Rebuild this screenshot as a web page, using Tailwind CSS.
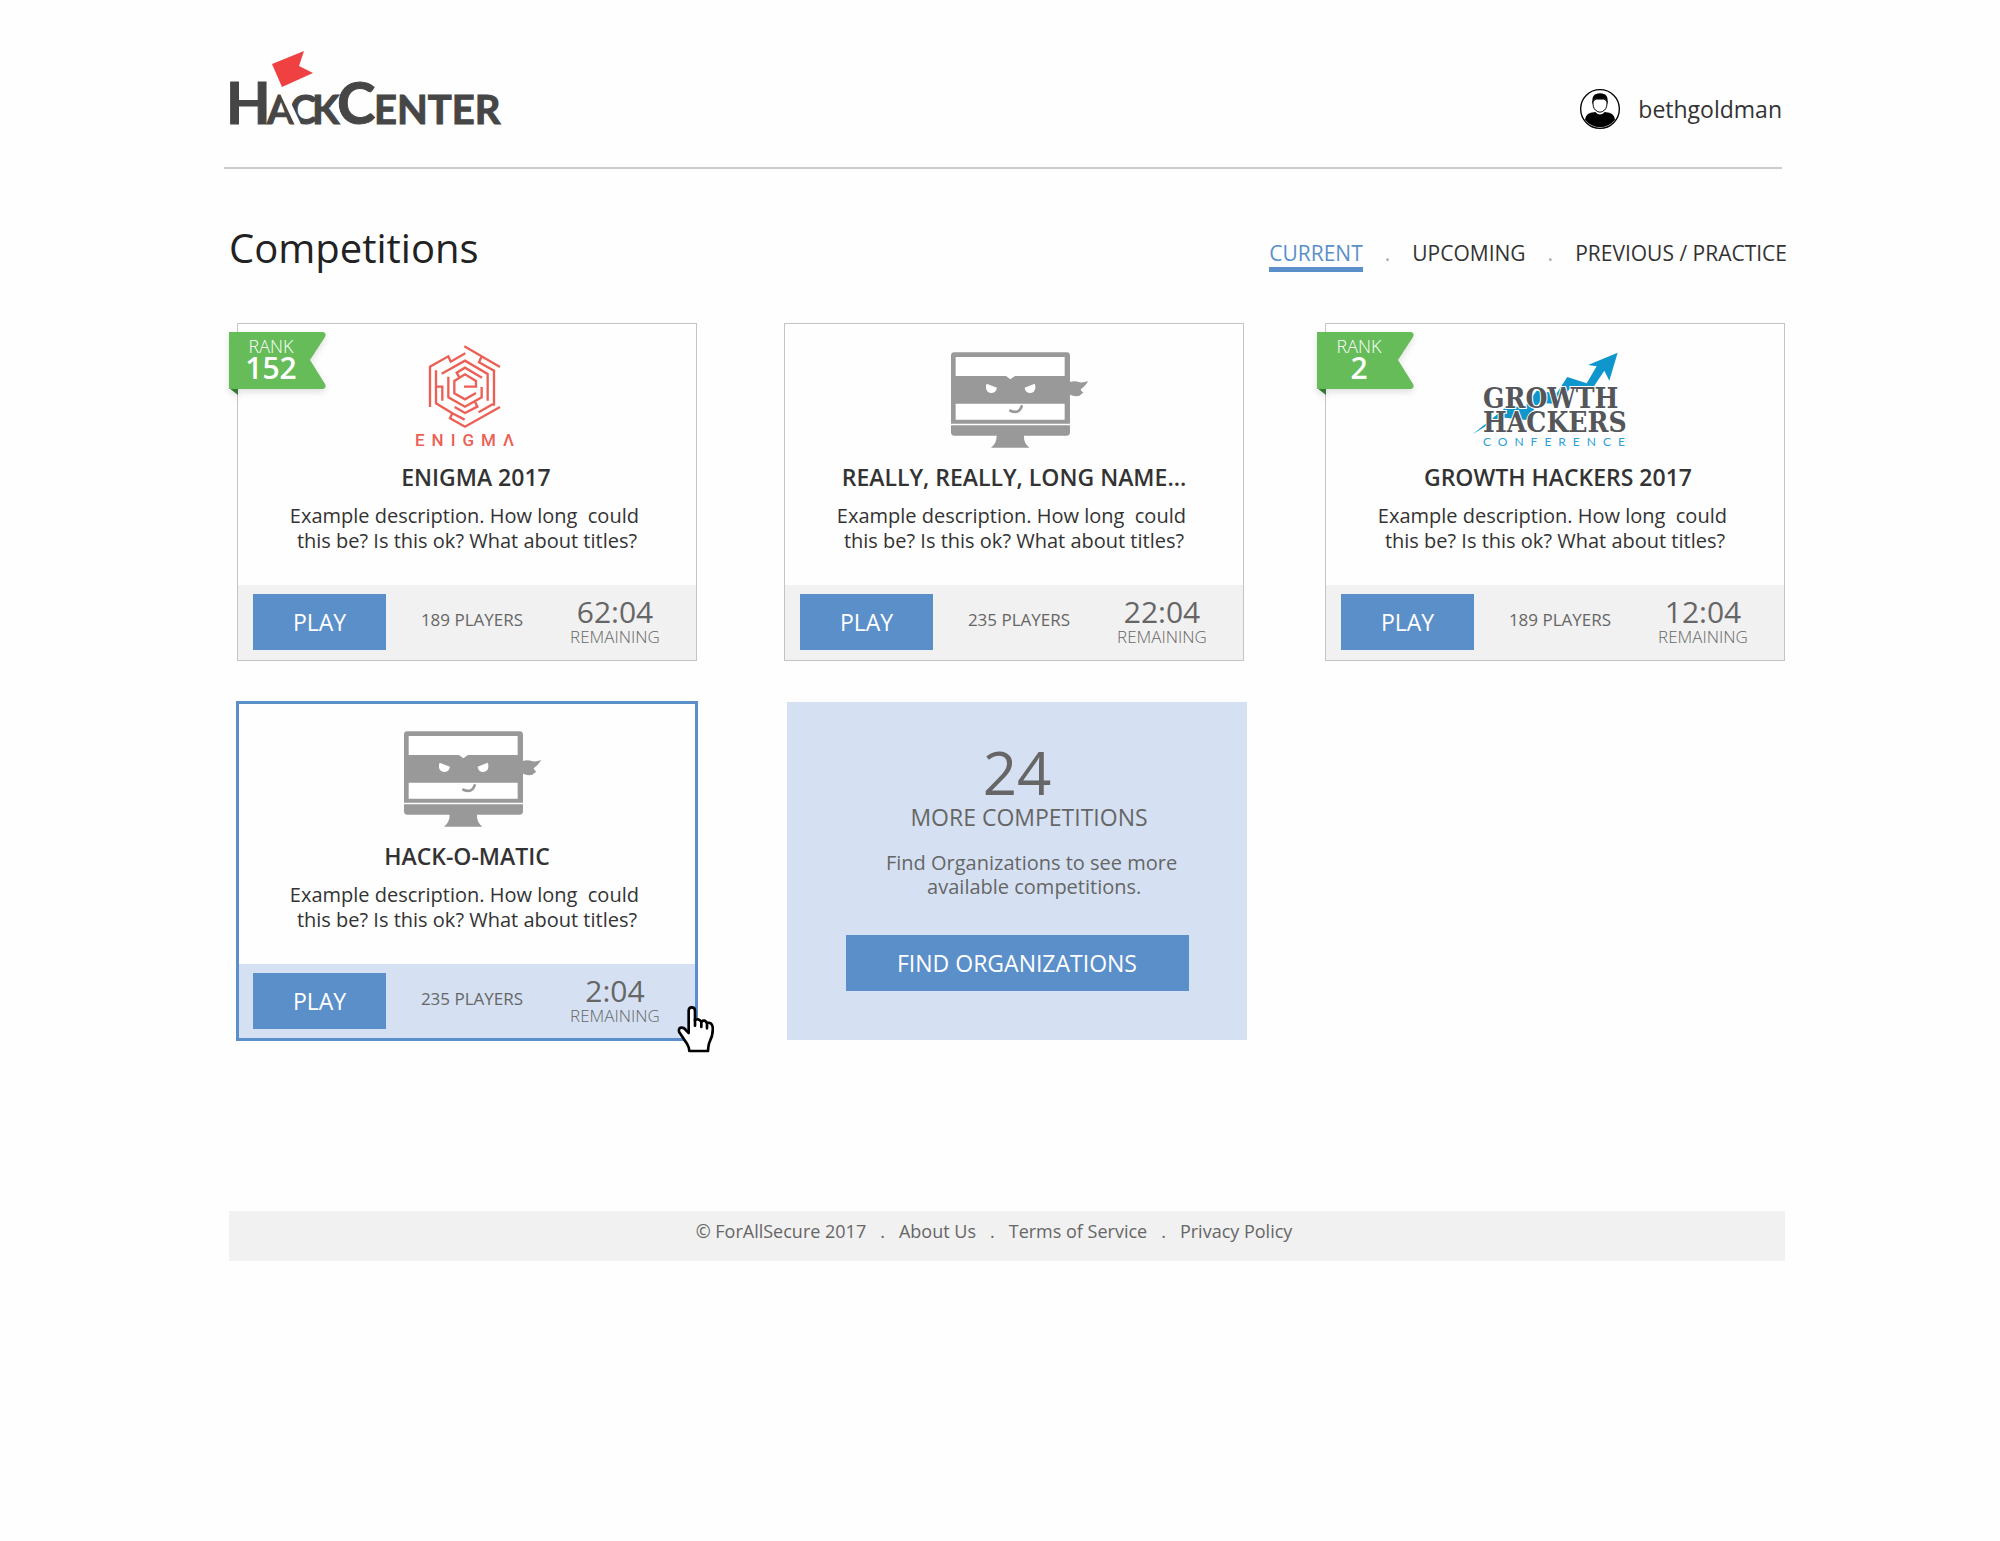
<!DOCTYPE html>
<html lang="en">
<head>
  <meta charset="UTF-8" />
  <meta name="viewport" content="width=device-width, initial-scale=1.0"/>
  <title>HackCenter - Competitions</title>
  <script src="https://cdn.jsdelivr.net/npm/@tailwindcss/browser@4"></script>
</head>
<body class="bg-[#fefefe] font-['Open_Sans',sans-serif] text-[#333]">

  <!-- HEADER -->
  <header class="ml-[224px] mr-[218px] pt-[45px] pb-[38px] flex items-end justify-between border-b-2 border-[#ccc]">
    <a href="#" aria-label="HackCenter">
      <svg class="block" width="290" height="84" viewBox="-1 0 290 84" fill="#464646">
        <g font-family="Lato, sans-serif" font-weight="700" font-size="40" stroke="#464646" stroke-width="1">
          <text y="79"><tspan x="1" font-size="58">H</tspan><tspan x="42">A</tspan><tspan x="65">C</tspan><tspan x="87">K</tspan><tspan x="112" font-size="58">C</tspan><tspan x="149">ENTER</tspan></text>
        </g>
        <path d="M58 48L74 82" stroke="#fefefe" stroke-width="6"/>
        <path d="M47 19L79 6L74 21L88 28L57 42Z" fill="#ef4141"/>
      </svg>
    </a>
    <a href="#" class="flex items-center gap-[18px] text-[23px] leading-[40px]">
      <svg width="40" height="40" viewBox="0 0 120 120">
        <circle cx="60" cy="60" r="58" fill="#fff" stroke="#000" stroke-width="4"/>
        <path d="M15 92Q17 75 32 71L46 69Q60 84 74 69L88 71Q103 75 105 92A56 56 0 0 1 15 92Z"/>
        <path d="M39 36Q38 56 46 63Q60 76 74 63Q82 56 81 36Q60 20 39 36Z" fill="#fff" stroke="#000" stroke-width="3"/>
        <path d="M38 46Q32 13 60 13Q88 13 82 46Q80 33 73 29Q60 34 47 29Q40 33 38 46Z"/>
      </svg>
      bethgoldman
    </a>
  </header>

  <main class="pl-[229px] pr-[213px] pt-[49px]">
    <div class="flex items-end justify-between">
      <h1 class="text-[40px] leading-[60px] text-[#222]">Competitions</h1>
      <nav class="flex gap-[22px] pb-[6px] text-[21px] leading-[28px]">
        <a href="#" class="border-b-5 border-[#5b8fc9] text-[#5b8fc9]">CURRENT</a>
        <span class="text-[#aaa]">.</span>
        <a href="#">UPCOMING</a>
        <span class="text-[#aaa]">.</span>
        <a href="#">PREVIOUS / PRACTICE</a>
      </nav>
    </div>

    <!-- COMPETITIONS -->
    <div class="mt-[45px] pl-2 pr-[2px] grid grid-cols-[547fr_541fr_460fr]">

      <article class="relative w-[460px] border border-[#c4c4c6] text-center">
        <div class="absolute -left-[9px] top-2">
          <svg class="block overflow-visible drop-shadow-md" width="97" height="63" viewBox="0 0 97 63">
            <path d="M0 56H9V63Z" fill="#2f7a33"/>
            <path d="M0 0H94Q98 1 96 5L81 28L96 52Q98 56 94 57H0Z" fill="#66bc59"/>
          </svg>
          <div class="absolute left-0 top-0 w-[84px] pt-[6px] text-white">
            <p class="text-[18px] leading-[16px] font-light">RANK</p>
            <p class="text-[30px] leading-[28px] font-semibold">152</p>
          </div>
        </div>
        <div class="pt-[18px] pb-8">
          <svg class="mx-auto block" width="170" height="110" viewBox="0 0 170 110">
            <g transform="translate(18 -7) scale(.3333)" fill="none" stroke="#ec5f55" stroke-width="7">
              <path d="M90 216V95L145 64L152 80L196 55"/>
              <path d="M193 34L300 96M245 64L237 82L282 107V212"/>
              <path d="M108 106V205L157 235L150 250L195 275L300 216M157 235L194 254"/>
              <path d="M108 155H127V197"/>
              <path d="M125 116L195 77L263 117V197"/>
              <path d="M145 125V187L195 215L245 187V156"/>
              <path d="M178 127L170 113L195 98L246 128"/>
              <path d="M192 155H228V138L195 118L163 138V175L195 193L228 174"/>
              <path d="M164 216L195 234L232 215L225 200"/>
              <path d="M236 232L279 207"/>
            </g>
            <text class="tracking-[7px]" x="33" y="104" font-family="Roboto, sans-serif" font-weight="500" font-size="17" fill="#ec5f55">ENIGMΛ</text>
          </svg>
          <h2 class="mt-[10px] text-[23px] leading-[30px] font-semibold">&nbsp;&nbsp;&nbsp;ENIGMA 2017</h2>
          <p class="mt-[11px] text-[20px] leading-[25px]">Example description. How long&nbsp; could&nbsp;<br>this be? Is this ok? What about titles?</p>
        </div>
        <div class="flex items-center bg-[#f1f1f1] pt-[9px] pb-[10px] pl-[15px] pr-6 text-[#666]">
          <button class="h-[56px] w-[133px] bg-[#5b8fc9] text-[23px] text-white">PLAY</button>
          <p class="flex-1 pb-1 text-[17px]">189 PLAYERS</p>
          <div class="w-[114px]">
            <p class="text-[30px] leading-[30px]">62:04</p>
            <p class="text-[17px] leading-[20px] font-light">REMAINING</p>
          </div>
        </div>
      </article>

      <article class="relative w-[460px] border border-[#c4c4c6] text-center">
        <div class="pt-[18px] pb-8">
          <svg class="mx-auto block" width="170" height="110" viewBox="0 0 170 110">
            <g id="ninja" transform="translate(1 -7) scale(.3333)" fill="#999">
              <path d="M73 52H410Q420 52 420 62V266H63V62Q63 52 73 52Z"/>
              <path d="M77 66H404V123H255L241 133L228 123H77ZM77 206H404V254H77Z" fill="#fff"/>
              <path d="M170 146L201 158Q198 174 183 174Q166 172 168 152ZM314 146L284 158Q286 174 301 174Q318 172 316 152Z" fill="#fff"/>
              <path d="M241 227Q267 238 275 214" fill="none" stroke="#999" stroke-width="8" stroke-linecap="round"/>
              <path d="M420 141Q433 136 449 142Q463 143 474 138Q468 152 452 163Q454 171 460 173Q452 177 449 182Q434 186 420 179Z"/>
              <path d="M63 271H420V292Q420 302 410 302H73Q63 302 63 292Z"/>
              <path d="M200 300H282Q280 325 298 338H183Q201 325 200 300Z"/>
            </g>
          </svg>
          <h2 class="mt-[10px] text-[23px] leading-[30px] font-semibold">REALLY, REALLY, LONG NAME...</h2>
          <p class="mt-[11px] text-[20px] leading-[25px]">Example description. How long&nbsp; could&nbsp;<br>this be? Is this ok? What about titles?</p>
        </div>
        <div class="flex items-center bg-[#f1f1f1] pt-[9px] pb-[10px] pl-[15px] pr-6 text-[#666]">
          <button class="h-[56px] w-[133px] bg-[#5b8fc9] text-[23px] text-white">PLAY</button>
          <p class="flex-1 pb-1 text-[17px]">235 PLAYERS</p>
          <div class="w-[114px]">
            <p class="text-[30px] leading-[30px]">22:04</p>
            <p class="text-[17px] leading-[20px] font-light">REMAINING</p>
          </div>
        </div>
      </article>

      <article class="relative w-[460px] border border-[#c4c4c6] text-center">
        <div class="absolute -left-[9px] top-2">
          <svg class="block overflow-visible drop-shadow-md" width="97" height="63" viewBox="0 0 97 63">
            <path d="M0 56H9V63Z" fill="#2f7a33"/>
            <path d="M0 0H94Q98 1 96 5L81 28L96 52Q98 56 94 57H0Z" fill="#66bc59"/>
          </svg>
          <div class="absolute left-0 top-0 w-[84px] pt-[6px] text-white">
            <p class="text-[18px] leading-[16px] font-light">RANK</p>
            <p class="text-[30px] leading-[28px] font-semibold">2</p>
          </div>
        </div>
        <div class="pt-[18px] pb-8">
          <svg class="mx-auto block overflow-visible" width="170" height="110" viewBox="0 0 170 110">
            <path transform="translate(-10 -2) scale(.3333)" d="M473 38L384 75L410 79L380 130L322 111L290 160L230 152L195 200L140 200L38 283L120 232L198 240L238 188L290 192L335 140L400 142L433 92L448 122Z" fill="#0f96cc"/>
            <g font-family="'DejaVu Serif Condensed', 'DejaVu Serif', serif" font-weight="700" font-size="28" fill="#55565a" stroke="#fff" stroke-width="2" paint-order="stroke">
              <text x="13" y="66">GROWTH</text>
              <text x="13" y="90">HACKERS</text>
            </g>
            <text class="tracking-[7px]" x="13" y="104" font-family="Lato, sans-serif" font-size="12" fill="#2a9fd8">CONFERENCE</text>
          </svg>
          <h2 class="mt-[10px] text-[23px] leading-[30px] font-semibold">&nbsp;GROWTH HACKERS 2017</h2>
          <p class="mt-[11px] text-[20px] leading-[25px]">Example description. How long&nbsp; could&nbsp;<br>this be? Is this ok? What about titles?</p>
        </div>
        <div class="flex items-center bg-[#f1f1f1] pt-[9px] pb-[10px] pl-[15px] pr-6 text-[#666]">
          <button class="h-[56px] w-[133px] bg-[#5b8fc9] text-[23px] text-white">PLAY</button>
          <p class="flex-1 pb-1 text-[17px]">189 PLAYERS</p>
          <div class="w-[114px]">
            <p class="text-[30px] leading-[30px]">12:04</p>
            <p class="text-[17px] leading-[20px] font-light">REMAINING</p>
          </div>
        </div>
      </article>
    </div>

    <div class="mt-[41px] flex gap-[90px] pl-2">
      <!-- hovered card -->
      <article class="relative w-[460px] border border-[#5b8fc9] outline-3 -outline-offset-2 outline-[#5b8fc9] text-center">
        <div class="pt-[18px] pb-8">
          <svg class="mx-auto block" width="170" height="110" viewBox="0 0 170 110"><use href="#ninja"/></svg>
          <h2 class="mt-[10px] text-[23px] leading-[30px] font-semibold">HACK-O-MATIC</h2>
          <p class="mt-[11px] text-[20px] leading-[25px]">Example description. How long&nbsp; could&nbsp;<br>this be? Is this ok? What about titles?</p>
        </div>
        <div class="flex items-center bg-[#d5e1f2] pt-[9px] pb-[10px] pl-[15px] pr-6 text-[#666]">
          <button class="h-[56px] w-[133px] bg-[#5b8fc9] text-[23px] text-white">PLAY</button>
          <p class="flex-1 pb-1 text-[17px]">235 PLAYERS</p>
          <div class="w-[114px]">
            <p class="text-[30px] leading-[30px]">2:04</p>
            <p class="text-[17px] leading-[20px] font-light">REMAINING</p>
          </div>
        </div>
        <svg class="absolute -right-[18px] -bottom-[14px]" width="38" height="48" viewBox="0 0 114 144">
          <path d="M38 84V18Q38 7 47 7Q57 7 57 18V46Q66 38 76 50Q86 42 93 54Q107 50 110 66Q112 88 102 108Q97 118 96 138H40Q40 128 34 118L10 82Q6 70 15 68Q24 67 30 76Z" fill="#fff" stroke="#000" stroke-width="8" stroke-linejoin="round"/>
          <path d="M57 44V62M76 50V66M93 54V70" stroke="#000" stroke-width="8" stroke-linecap="round"/>
        </svg>
      </article>

      <section class="w-[460px] bg-[#d5e1f2] pt-[41px] pb-12 text-center text-[#666]">
        <p class="text-[60px] leading-[58px]">24</p>
        <div class="pl-6">
          <h2 class="text-[23px] leading-[32px]">MORE COMPETITIONS</h2>
          <p class="mt-[18px] text-[20px] leading-[24px]">&nbsp;Find Organizations to see more<br>&nbsp;&nbsp;available competitions.</p>
        </div>
        <button class="mt-9 h-[56px] w-[343px] bg-[#5b8fc9] text-[23px] text-white">FIND ORGANIZATIONS</button>
      </section>
    </div>

    <!-- FOOTER -->
    <footer class="mt-[171px] mr-[2px] flex h-[50px] justify-center gap-[14px] bg-[#f1f1f1] pt-[6px] pr-[26px] text-[18px] leading-[28px] text-[#666]">
      <span>© ForAllSecure 2017</span>
      <span>.</span>
      <a href="#">About Us</a>
      <span>.</span>
      <a href="#">Terms of Service</a>
      <span>.</span>
      <a href="#">Privacy Policy</a>
    </footer>
  </main>

</body>
</html>
